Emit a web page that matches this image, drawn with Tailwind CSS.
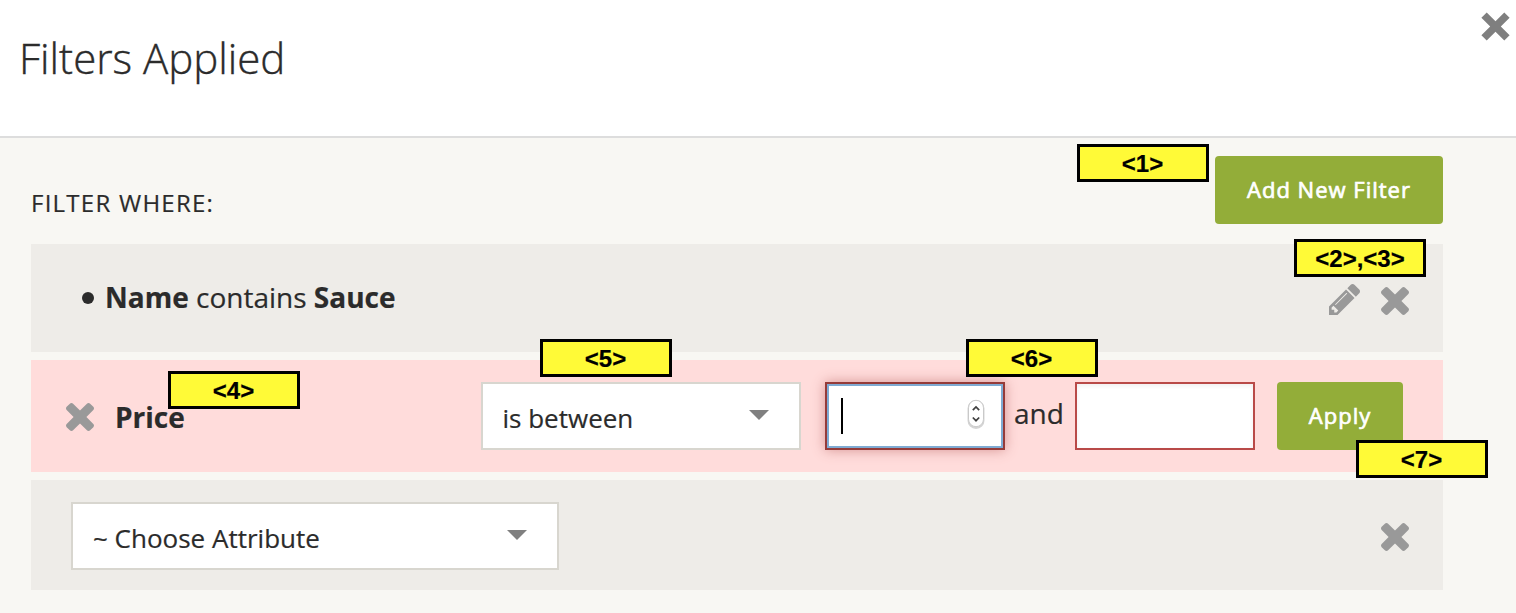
<!DOCTYPE html>
<html lang="en">
<head>
<meta charset="utf-8">
<title>Filters Applied</title>
<script src="https://cdn.jsdelivr.net/npm/@tailwindcss/browser@4"></script>
</head>
<body class="relative h-[613px] w-[1516px] overflow-hidden bg-[#f8f7f3] font-['Open_Sans','Noto_Sans',sans-serif] text-[#2b2b2b] [-webkit-text-stroke:0.2px]">
<svg class="hidden">
  <symbol id="times" viewBox="302 366 1188 1188"><path d="M1490 1322q0 40-28 68l-136 136q-28 28-68 28t-68-28l-294-294-294 294q-28 28-68 28t-68-28l-136-136q-28-28-28-68t28-68l294-294-294-294q-28-28-28-68t28-68l136-136q28-28 68-28t68 28l294 294 294-294q28-28 68-28t68 28l136 136q28 28 28 68t-28 68l-294 294 294 294q28 28 28 68z"/></symbol>
</svg>

<header class="flex h-[138px] items-start justify-between border-b-2 border-[#dddddd] bg-white pl-[19px]">
  <h1 class="mt-7 text-[42px] leading-[60px] font-light whitespace-nowrap [-webkit-text-stroke:0.4px]">Filters Applied</h1>
  <svg class="mt-3 mr-1.5 size-[29px] fill-[#7f7f7f]" viewBox="0 0 29 29"><path d="M5.7 0.4 14.5 9.2 23.3 0.4 28.6 5.7 19.8 14.5 28.6 23.3 23.3 28.6 14.5 19.8 5.7 28.6 0.4 23.3 9.2 14.5 0.4 5.7Z"/></svg>
</header>

<main class="mr-[73px] ml-[31px]">
  <div class="flex h-[106px] items-start justify-between pt-[18px]">
    <h2 class="mt-[31px] text-[24px] leading-8 tracking-[1.25px] whitespace-nowrap">FILTER WHERE:</h2>
    <button class="h-[68px] w-[228px] rounded bg-[#93ad39] pb-px text-[22px] tracking-[1px] whitespace-nowrap text-white [-webkit-text-stroke:0.7px]">Add New Filter</button>
  </div>

  <div class="flex flex-col gap-2">
    <section class="flex h-[108px] items-center bg-[#eeece8] pr-[34.5px] pl-[51px]">
      <span class="mr-[11px] size-3 rounded-full bg-[#2b2b2b]"></span>
      <p class="mb-0.5 text-[28px] leading-10 whitespace-nowrap"><b>Name</b> contains <b>Sauce</b></p>
      <svg class="mt-[3px] mr-[21px] ml-auto size-[31px] fill-[#999999]" viewBox="128 149 1515 1515"><path d="M491 1536l91-91-235-235-91 91v107h128v128h107zm523-928q0-22-22-22-10 0-17 7l-542 542q-7 7-7 17 0 22 22 22 10 0 17-7l542-542q7-7 7-17zm-54-192l416 416-832 832h-416v-416zm683 96q0 53-37 90l-166 166-416-416 166-165q36-38 90-38 53 0 91 38l235 234q37 39 37 91z"/></svg>
      <svg class="mt-[5px] size-7 fill-[#999999]"><use href="#times"/></svg>
    </section>

    <section class="flex h-[112px] items-center bg-[#ffdcdb] pr-10 pl-[34.5px]">
      <svg class="mt-px mr-[21.5px] size-7 fill-[#999999]"><use href="#times"/></svg>
      <b class="w-[366px] pt-px text-[28px] leading-10">Price</b>
      <div class="flex h-[68px] w-[320px] items-center justify-between border-2 border-[#d8d6cf] bg-white pr-[30px] pl-[19.5px]">
        <span class="pt-[3px] text-[26px] leading-9">is between</span>
        <svg class="mb-0.5 h-2.5 w-5 fill-[#808080]" viewBox="0 0 20 10"><path d="M0 0H20L10 10Z"/></svg>
      </div>
      <div class="ml-6 flex h-[68px] w-[180px] items-center justify-between border-2 border-[#953b39] bg-white pr-[18px] pl-3.5 shadow-[inset_0_0_0_2px_#7fabd3,0_0_12px_#d59392]">
        <span class="h-9 w-0.5 bg-black"></span>
        <svg class="mb-1 h-[30px] w-[18px]" viewBox="0 0 18 30" fill="none"><rect x="1.5" y="2" width="15" height="27" rx="7.5" stroke="#d5d5d5" stroke-width="2"/><rect x="1.5" y="1.3" width="15" height="26.4" rx="7.5" fill="#fff" stroke="#c9c9c9"/><path d="M5.8 11.2 9 8 12.2 11.2M5.8 18.5 9 21.7 12.2 18.5" stroke="#404040" stroke-width="1.7"/></svg>
      </div>
      <span class="mb-1.5 w-[70px] pr-0.5 text-center text-[28px] leading-10">and</span>
      <div class="h-[68px] w-[180px] border-2 border-[#b94a48] bg-white shadow-[inset_0_2px_4px_#00000010]"></div>
      <button class="ml-[22px] h-[68px] w-[126px] rounded bg-[#93ad39] pb-px text-[22px] tracking-[1px] text-white [-webkit-text-stroke:0.7px]">Apply</button>
    </section>

    <section class="flex h-[110px] items-center justify-between bg-[#eeece8] pr-[34.5px] pl-10">
      <div class="mb-[-2px] flex h-[68px] w-[488px] items-center justify-between border-2 border-[#d8d6cf] bg-white pr-[30px] pl-5">
        <span class="pt-[3px] text-[26px] leading-9 whitespace-nowrap">~ Choose Attribute</span>
        <svg class="mb-0.5 h-2.5 w-5 fill-[#808080]" viewBox="0 0 20 10"><path d="M0 0H20L10 10Z"/></svg>
      </div>
      <svg class="mt-[3px] size-7 fill-[#999999]"><use href="#times"/></svg>
    </section>
  </div>
</main>

<div class="font-['Liberation_Sans',Arial,sans-serif] text-[24px] leading-[33px] font-bold text-black">
  <div class="absolute top-[144px] left-[1077px] h-[38px] w-[132px] border-3 border-black bg-[#fffa37] pr-px text-center">&lt;1&gt;</div>
  <div class="absolute top-[239px] left-[1294px] h-[38px] w-[132px] border-3 border-black bg-[#fffa37] text-center">&lt;2&gt;,&lt;3&gt;</div>
  <div class="absolute top-[371px] left-[168px] h-[38px] w-[132px] border-3 border-black bg-[#fffa37] pr-px text-center">&lt;4&gt;</div>
  <div class="absolute top-[339px] left-[540px] h-[38px] w-[132px] border-3 border-black bg-[#fffa37] pr-px text-center">&lt;5&gt;</div>
  <div class="absolute top-[339px] left-[966px] h-[38px] w-[132px] border-3 border-black bg-[#fffa37] pr-px text-center">&lt;6&gt;</div>
  <div class="absolute top-[440px] left-[1356px] h-[38px] w-[132px] border-3 border-black bg-[#fffa37] pr-px text-center">&lt;7&gt;</div>
</div>
</body>
</html>
